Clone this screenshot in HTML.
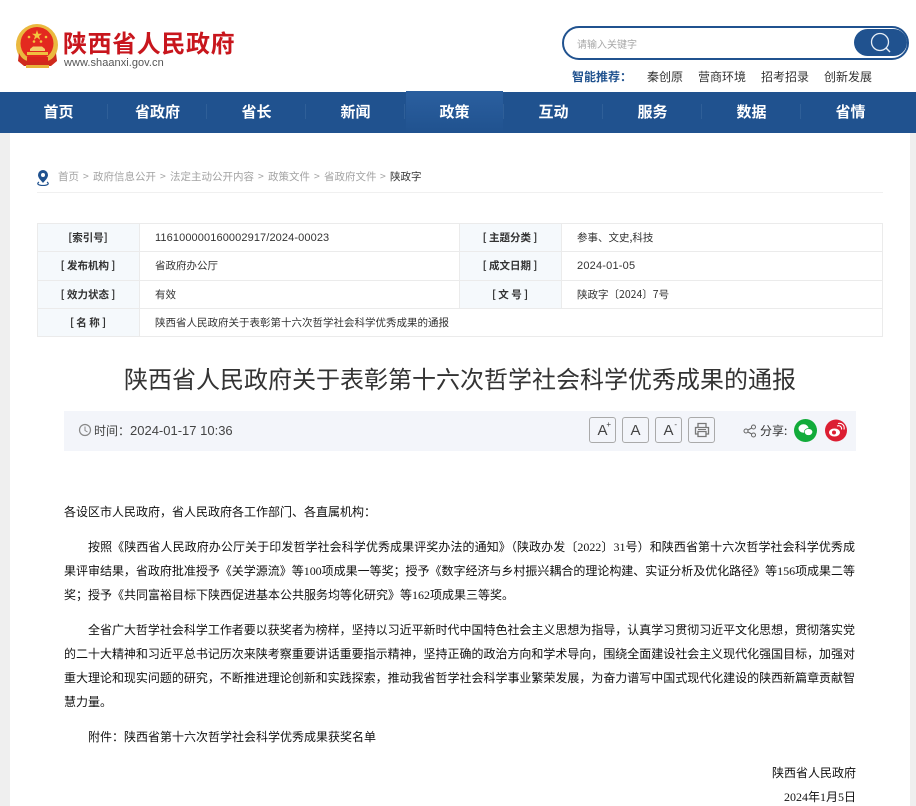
<!DOCTYPE html>
<html lang="zh-CN"><head><meta charset="utf-8"><title>陕西省人民政府</title>
<style>
html,body{margin:0;padding:0;width:916px;height:806px;overflow:hidden;background:#fff}
body{position:relative;font-family:"Liberation Sans","Noto Sans CJK SC",sans-serif;color:#333}
.a{position:absolute;white-space:nowrap}
.nav{position:absolute;top:102px;width:99px;text-align:center;font:bold 15px/20px "Noto Sans CJK SC",sans-serif;color:#fff}
.sep{position:absolute;top:104px;width:1px;height:15px;background:#2f5f98}
.cell{position:absolute;font:10.5px/16px "Noto Sans CJK SC",sans-serif;color:#333;white-space:nowrap}
.lab{position:absolute;text-align:center;width:102px;font:bold 10.5px/16px "Noto Sans CJK SC",sans-serif;color:#333;white-space:pre}
.ln{position:absolute;height:24px;font:12px/24px "Liberation Serif","WenQuanYi Zen Hei","Noto Sans CJK SC",sans-serif;color:#111;white-space:nowrap}
.j{text-align:justify;text-align-last:justify;letter-spacing:-.02px}
.btn{position:absolute;top:417px;width:25px;height:24px;border:1px solid #aaa;border-radius:3px;text-align:center;font:15px/25px "Liberation Sans",sans-serif;color:#444}
.btn sup{position:absolute;font-size:8px;line-height:8px;top:3px;right:4px}
.rec{position:absolute;top:69px;font:12px/16px "Noto Sans CJK SC",sans-serif;color:#333;white-space:nowrap}
.bc{position:absolute;top:169px;font:10.5px/16px "Noto Sans CJK SC",sans-serif;color:#a3a3a3;white-space:nowrap}
</style></head><body>
<div class="a" style="left:0;top:133px;width:10px;height:673px;background:#efefef"></div>
<div class="a" style="left:910px;top:133px;width:6px;height:673px;background:#efefef"></div>

<svg class="a" style="left:15px;top:24px" width="44" height="46" viewBox="0 0 44 46">
<circle cx="22" cy="21" r="21" fill="#eab93f"/><circle cx="22" cy="19.500" r="16.500" fill="#e3291f"/>
<path d="M22 6l1.200 3.700h3.800l-3 2.300 1.100 3.700-3.100-2.300-3.100 2.300 1.100-3.700-3-2.300h3.800z" fill="#f4c63f"/>
<circle cx="14" cy="13" r="1.300" fill="#f4c63f"/><circle cx="31" cy="13" r="1.300" fill="#f4c63f"/><circle cx="19" cy="17.500" r="1.300" fill="#f4c63f"/><circle cx="26" cy="17.500" r="1.300" fill="#f4c63f"/>
<path d="M15 25l3-2.500h9l3 2.500v2H15z" fill="#f3cd6a"/><path d="M12 28h21v3H12z" fill="#f0c040"/>
<path d="M4 29c2 5 6 8 10 8h17c4 0 8-3 10-8l1 8-6 5H9l-6-5z" fill="#cf2a1d"/><path d="M12 33h21v5H12z" fill="#d8261c"/>
<path d="M11 41h23v3H11z" fill="#e8b33a"/>
</svg>
<div class="a" style="left:63px;top:24px;font:bold 24px/36px 'Noto Sans CJK SC',sans-serif;color:#c8161d;letter-spacing:.6px">陕西省人民政府</div>
<div class="a" style="left:64px;top:57px;font:11px/13px 'Liberation Sans',sans-serif;color:#555;letter-spacing:.05px">www.shaanxi.gov.cn</div>

<div class="a" style="left:562px;top:26px;width:343px;height:30px;border:2px solid #20528f;border-radius:17px"></div>
<div class="a" style="left:854px;top:29px;width:53px;height:27px;background:#20528f;border-radius:14px"></div>
<svg class="a" style="left:867px;top:29px" width="28" height="28" viewBox="0 0 28 28"><circle cx="13" cy="13" r="8.500" fill="none" stroke="#e6edf5" stroke-width="1.300"/><path d="M19 19l4 4" stroke="#e6edf5" stroke-width="1.500"/></svg>
<div class="a" style="left:577px;top:36px;font:10px/15px 'Noto Sans CJK SC',sans-serif;color:#a8a8a8">请输入关键字</div>

<div class="rec" style="left:572px;color:#20528f;font-weight:bold">智能推荐：</div>
<div class="rec" style="left:647px">秦创原</div><div class="rec" style="left:698px">营商环境</div><div class="rec" style="left:761px">招考招录</div><div class="rec" style="left:824px">创新发展</div>

<div class="a" style="left:0;top:92px;width:916px;height:41px;background:#20528f"></div>
<div class="sep" style="left:107px"></div><div class="sep" style="left:206px"></div><div class="sep" style="left:305px"></div><div class="sep" style="left:404px"></div><div class="sep" style="left:503px"></div><div class="sep" style="left:602px"></div><div class="sep" style="left:701px"></div><div class="sep" style="left:800px"></div>
<div class="a" style="left:406px;top:91px;width:97px;height:42px;background:linear-gradient(#2b5f9f,#20528f)"></div>
<div class="nav" style="left:9px">首页</div><div class="nav" style="left:108px">省政府</div><div class="nav" style="left:207px">省长</div><div class="nav" style="left:306px">新闻</div><div class="nav" style="left:405px">政策</div><div class="nav" style="left:504px">互动</div><div class="nav" style="left:603px">服务</div><div class="nav" style="left:702px">数据</div><div class="nav" style="left:801px">省情</div>

<svg class="a" style="left:36px;top:169px" width="14" height="17" viewBox="0 0 14 17"><path d="M7 1a5 5 0 0 1 5 5c0 3-3 5.500-5 8-2-2.500-5-5-5-8a5 5 0 0 1 5-5z" fill="#20528f"/><circle cx="7" cy="6" r="2" fill="#fff"/><path d="M3 13c-3 2 0 3.500 4 3.500s7-1.500 4-3.500" fill="none" stroke="#20528f" stroke-width="1.200"/></svg>
<div class="bc" style="left:58px">首页</div><div class="bc" style="left:83px">&gt;</div>
<div class="bc" style="left:93px">政府信息公开</div><div class="bc" style="left:160px">&gt;</div>
<div class="bc" style="left:170px">法定主动公开内容</div><div class="bc" style="left:258px">&gt;</div>
<div class="bc" style="left:268px">政策文件</div><div class="bc" style="left:314px">&gt;</div>
<div class="bc" style="left:324px">省政府文件</div><div class="bc" style="left:380px">&gt;</div>
<div class="bc" style="left:390px;color:#333">陕政字</div>
<div class="a" style="left:37px;top:192px;width:846px;height:1px;background:#f0f0f0"></div>

<div class="a" style="left:37px;top:223px;width:846px;height:114px;box-sizing:border-box;border:1px solid #ebebeb"></div>
<div class="a" style="left:38px;top:224px;width:101px;height:112px;background:#f5f9fc"></div>
<div class="a" style="left:460px;top:224px;width:101px;height:84px;background:#f5f9fc"></div>
<div class="a" style="left:37px;top:251px;width:846px;height:1px;background:#ebebeb"></div>
<div class="a" style="left:37px;top:280px;width:846px;height:1px;background:#ebebeb"></div>
<div class="a" style="left:37px;top:308px;width:846px;height:1px;background:#ebebeb"></div>
<div class="a" style="left:139px;top:223px;width:1px;height:114px;background:#ebebeb"></div>
<div class="a" style="left:459px;top:223px;width:1px;height:85px;background:#ebebeb"></div>
<div class="a" style="left:561px;top:223px;width:1px;height:85px;background:#ebebeb"></div>

<div class="lab" style="left:37px;top:230px">[索引号]</div>
<div class="lab" style="left:37px;top:258px">[ 发布机构 ]</div>
<div class="lab" style="left:37px;top:287px">[ 效力状态 ]</div>
<div class="lab" style="left:37px;top:315px">[ 名 称 ]</div>
<div class="lab" style="left:459px;top:230px">[ 主题分类 ]</div>
<div class="lab" style="left:459px;top:258px">[ 成文日期 ]</div>
<div class="lab" style="left:459px;top:287px">[ 文 号 ]</div>
<div class="cell" style="left:155px;top:230px;font-family:'Liberation Sans',sans-serif;font-size:11px;letter-spacing:.11px">116100000160002917/2024-00023</div>
<div class="cell" style="left:155px;top:258px">省政府办公厅</div>
<div class="cell" style="left:155px;top:287px">有效</div>
<div class="cell" style="left:155px;top:315px">陕西省人民政府关于表彰第十六次哲学社会科学优秀成果的通报</div>
<div class="cell" style="left:577px;top:230px">参事、文史,科技</div>
<div class="cell" style="left:577px;top:258px;font-family:'Liberation Sans',sans-serif;font-size:11px;letter-spacing:.2px">2024-01-05</div>
<div class="cell" style="left:577px;top:287px">陕政字〔2024〕7号</div>

<div class="a" style="left:0;top:360px;width:920px;text-align:center;font:24px/36px 'Noto Sans CJK SC',sans-serif;color:#333">陕西省人民政府关于表彰第十六次哲学社会科学优秀成果的通报</div>

<div class="a" style="left:64px;top:411px;width:792px;height:40px;background:#f3f5fa"></div>
<svg class="a" style="left:78px;top:423px" width="14" height="14" viewBox="0 0 14 14"><circle cx="7" cy="7" r="5.500" fill="none" stroke="#888" stroke-width="1.200"/><path d="M7 3.500V7.500l2.500 1.500" fill="none" stroke="#888"/></svg>
<div class="a" style="left:94px;top:422px;font:12px/17px 'Noto Sans CJK SC',sans-serif;color:#444">时间：<span style="font-family:'Liberation Sans',sans-serif;font-size:13px">2024-01-17 10:36</span></div>
<div class="btn" style="left:589px">A<sup>+</sup></div><div class="btn" style="left:622px">A</div><div class="btn" style="left:655px">A<sup>-</sup></div>
<div class="btn" style="left:688px"></div>
<svg class="a" style="left:693px;top:421px" width="18" height="18" viewBox="0 0 18 18"><path d="M5 6V2.500h8V6M5 13H2.500V6.500h13V13H13M5 10.500h8V15.500H5z" fill="none" stroke="#777" stroke-width="1.300"/><path d="M5 8.500h8" stroke="#777"/></svg>
<svg class="a" style="left:743px;top:424px" width="14" height="14" viewBox="0 0 14 14"><g fill="none" stroke="#666"><circle cx="3" cy="7" r="2"/><circle cx="10.500" cy="3" r="2"/><circle cx="10.500" cy="11" r="2"/><path d="M5 6l3.700-2M5 8l3.700 2"/></g></svg>
<div class="a" style="left:760px;top:422px;font:12px/17px 'Noto Sans CJK SC',sans-serif;color:#333">分享:</div>
<svg class="a" style="left:794px;top:419px" width="23" height="23" viewBox="0 0 23 23"><circle cx="11.500" cy="11.500" r="11.500" fill="#12ab3a"/><ellipse cx="9.500" cy="9.500" rx="5" ry="4.200" fill="#fff"/><ellipse cx="14.500" cy="13" rx="4.200" ry="3.500" fill="#fff" stroke="#12ab3a" stroke-width=".7"/></svg>
<svg class="a" style="left:825px;top:419px" width="22" height="23" viewBox="0 0 22 23"><circle cx="11" cy="11.500" r="11" fill="#dc1e32"/><ellipse cx="9.500" cy="13.500" rx="5.500" ry="4" fill="#fff"/><circle cx="9" cy="13.500" r="2" fill="#dc1e32"/><path d="M12 7c3-1 5 1 4.500 3.500M13 4.500c4-1 7 2 6 6" fill="none" stroke="#fff" stroke-width="1.100"/></svg>

<div class="ln" style="left:64px;top:500px">各设区市人民政府，省人民政府各工作部门、各直属机构：</div>
<div class="ln j" style="left:88px;top:535px;width:767px">按照《陕西省人民政府办公厅关于印发哲学社会科学优秀成果评奖办法的通知》（陕政办发〔2022〕31号）和陕西省第十六次哲学社会科学优秀成</div>
<div class="ln j" style="left:64px;top:559px;width:791px">果评审结果，省政府批准授予《关学源流》等100项成果一等奖；授予《数字经济与乡村振兴耦合的理论构建、实证分析及优化路径》等156项成果二等</div>
<div class="ln" style="left:64px;top:583px">奖；授予《共同富裕目标下陕西促进基本公共服务均等化研究》等162项成果三等奖。</div>
<div class="ln j" style="left:88px;top:618px;width:767px">全省广大哲学社会科学工作者要以获奖者为榜样，坚持以习近平新时代中国特色社会主义思想为指导，认真学习贯彻习近平文化思想，贯彻落实党</div>
<div class="ln j" style="left:64px;top:642px;width:791px">的二十大精神和习近平总书记历次来陕考察重要讲话重要指示精神，坚持正确的政治方向和学术导向，围绕全面建设社会主义现代化强国目标，加强对</div>
<div class="ln j" style="left:64px;top:666px;width:791px">重大理论和现实问题的研究，不断推进理论创新和实践探索，推动我省哲学社会科学事业繁荣发展，为奋力谱写中国式现代化建设的陕西新篇章贡献智</div>
<div class="ln" style="left:64px;top:690px">慧力量。</div>
<div class="ln" style="left:88px;top:725px">附件：陕西省第十六次哲学社会科学优秀成果获奖名单</div>
<div class="ln" style="left:772px;top:761px">陕西省人民政府</div>
<div class="ln" style="left:784px;top:785px">2024年1月5日</div>
</body></html>
